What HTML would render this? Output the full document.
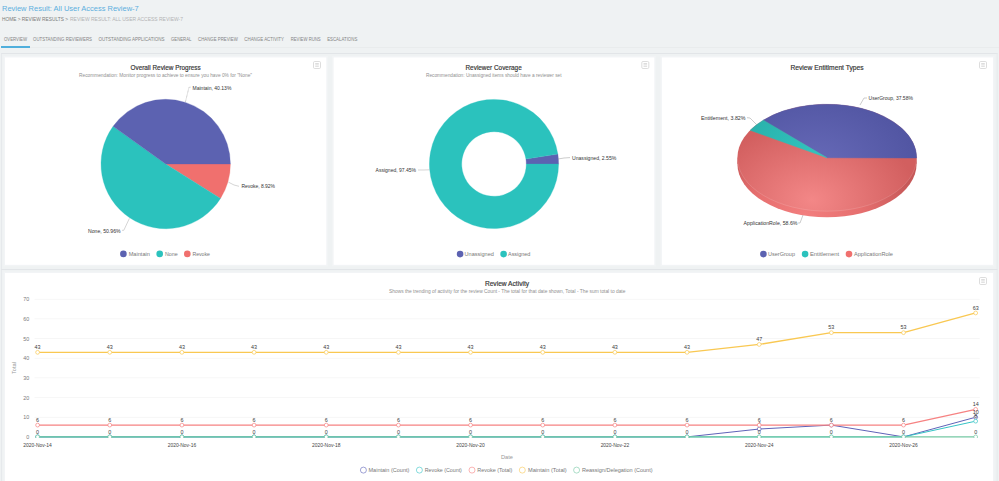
<!DOCTYPE html>
<html><head><meta charset="utf-8"><style>
html,body{margin:0;padding:0;width:999px;height:481px;overflow:hidden;background:#eff2f3;}
svg{display:block;font-family:"Liberation Sans", sans-serif;}
</style></head><body>
<svg width="999" height="481" viewBox="0 0 999 481">
<rect x="0" y="0" width="999" height="481" fill="#eff2f3"/>
<text x="2" y="11.1" font-size="8.0" fill="#5cafde" text-anchor="start" font-weight="normal" textLength="136.7" lengthAdjust="spacingAndGlyphs">Review Result: All User Access Review-7</text>
<text x="2" y="21.1" font-size="4.9" fill="#7a7a7a" text-anchor="start" font-weight="normal" textLength="66" lengthAdjust="spacingAndGlyphs">HOME &gt; REVIEW RESULTS &gt;</text>
<text x="70" y="21.2" font-size="4.9" fill="#b3b3b3" text-anchor="start" font-weight="normal" textLength="113" lengthAdjust="spacingAndGlyphs">REVIEW RESULT: ALL USER ACCESS REVIEW-7</text>
<text x="4" y="41.2" font-size="4.8" fill="#858585" text-anchor="start" font-weight="normal" textLength="23" lengthAdjust="spacingAndGlyphs">OVERVIEW</text>
<text x="33" y="41.2" font-size="4.8" fill="#858585" text-anchor="start" font-weight="normal" textLength="59" lengthAdjust="spacingAndGlyphs">OUTSTANDING REVIEWERS</text>
<text x="98.4" y="41.2" font-size="4.8" fill="#858585" text-anchor="start" font-weight="normal" textLength="66.2" lengthAdjust="spacingAndGlyphs">OUTSTANDING APPLICATIONS</text>
<text x="171" y="41.2" font-size="4.8" fill="#858585" text-anchor="start" font-weight="normal" textLength="20.4" lengthAdjust="spacingAndGlyphs">GENERAL</text>
<text x="198" y="41.2" font-size="4.8" fill="#858585" text-anchor="start" font-weight="normal" textLength="39.8" lengthAdjust="spacingAndGlyphs">CHANGE PREVIEW</text>
<text x="244.3" y="41.2" font-size="4.8" fill="#858585" text-anchor="start" font-weight="normal" textLength="39.7" lengthAdjust="spacingAndGlyphs">CHANGE ACTIVITY</text>
<text x="290.7" y="41.2" font-size="4.8" fill="#858585" text-anchor="start" font-weight="normal" textLength="30.0" lengthAdjust="spacingAndGlyphs">REVIEW RUNS</text>
<text x="327.2" y="41.2" font-size="4.8" fill="#858585" text-anchor="start" font-weight="normal" textLength="30.1" lengthAdjust="spacingAndGlyphs">ESCALATIONS</text>
<rect x="30" y="47.3" width="969" height="0.6" fill="#e4e7ea"/>
<rect x="1" y="46" width="29" height="2" fill="#50afdc"/>
<rect x="1" y="53" width="996.5" height="1" fill="#e2e5e8"/>
<rect x="1" y="53" width="0.8" height="428" fill="#e4e7ea"/>
<rect x="996.7" y="53" width="0.8" height="428" fill="#e4e7ea"/>
<rect x="1" y="269" width="996.5" height="1" fill="#e2e5e8"/>
<rect x="3.5" y="56.0" width="324.3" height="210.3" fill="#f2f4f6"/>
<rect x="5" y="57.5" width="321.3" height="207.3" fill="#fff"/>
<rect x="332.1" y="56.0" width="323.69999999999993" height="210.3" fill="#f2f4f6"/>
<rect x="333.6" y="57.5" width="320.69999999999993" height="207.3" fill="#fff"/>
<rect x="660.4" y="56.0" width="334.1" height="210.3" fill="#f2f4f6"/>
<rect x="661.9" y="57.5" width="331.1" height="207.3" fill="#fff"/>
<rect x="3.5" y="271.5" width="991" height="211" fill="#f2f4f6"/>
<rect x="5" y="273" width="988" height="208" fill="#fff"/>
<rect x="313.5" y="61.5" width="7" height="7" rx="1.2" fill="none" stroke="#d4d4d4" stroke-width="0.8"/>
<rect x="315.2" y="63.3" width="3.6" height="0.6" fill="#c6c6c6"/>
<rect x="315.2" y="64.6" width="3.6" height="0.6" fill="#c6c6c6"/>
<rect x="315.2" y="65.89999999999999" width="3.6" height="0.6" fill="#c6c6c6"/>
<rect x="641.8" y="61.5" width="7" height="7" rx="1.2" fill="none" stroke="#d4d4d4" stroke-width="0.8"/>
<rect x="643.5" y="63.3" width="3.6" height="0.6" fill="#c6c6c6"/>
<rect x="643.5" y="64.6" width="3.6" height="0.6" fill="#c6c6c6"/>
<rect x="643.5" y="65.89999999999999" width="3.6" height="0.6" fill="#c6c6c6"/>
<rect x="979.5" y="61.5" width="7" height="7" rx="1.2" fill="none" stroke="#d4d4d4" stroke-width="0.8"/>
<rect x="981.2" y="63.3" width="3.6" height="0.6" fill="#c6c6c6"/>
<rect x="981.2" y="64.6" width="3.6" height="0.6" fill="#c6c6c6"/>
<rect x="981.2" y="65.89999999999999" width="3.6" height="0.6" fill="#c6c6c6"/>
<rect x="979.5" y="277.5" width="7" height="7" rx="1.2" fill="none" stroke="#d4d4d4" stroke-width="0.8"/>
<rect x="981.2" y="279.3" width="3.6" height="0.6" fill="#c6c6c6"/>
<rect x="981.2" y="280.6" width="3.6" height="0.6" fill="#c6c6c6"/>
<rect x="981.2" y="281.90000000000003" width="3.6" height="0.6" fill="#c6c6c6"/>
<text x="130.5" y="69.5" font-size="7.2" fill="#333" text-anchor="start" font-weight="normal" textLength="70.2" lengthAdjust="spacingAndGlyphs" stroke="#333" stroke-width="0.18">Overall Review Progress</text>
<text x="79" y="76.6" font-size="5.0" fill="#8f8f8f" text-anchor="start" font-weight="normal" textLength="173" lengthAdjust="spacingAndGlyphs">Recommendation: Monitor progress to achieve to ensure you have 0% for "None"</text>
<text x="465.5" y="69.5" font-size="7.2" fill="#333" text-anchor="start" font-weight="normal" textLength="56.2" lengthAdjust="spacingAndGlyphs" stroke="#333" stroke-width="0.18">Reviewer Coverage</text>
<text x="426" y="76.6" font-size="5.0" fill="#8f8f8f" text-anchor="start" font-weight="normal" textLength="135.5" lengthAdjust="spacingAndGlyphs">Recommendation: Unassigned items should have a reviewer set</text>
<text x="790.4" y="69.5" font-size="7.2" fill="#333" text-anchor="start" font-weight="normal" textLength="73.2" lengthAdjust="spacingAndGlyphs" stroke="#333" stroke-width="0.18">Review Entitlment Types</text>
<path d="M165.7,164 L230.40,164.00 A64.7,64.7 0 0 1 220.51,198.38 Z" fill="#f0706e" stroke="#f0706e" stroke-width="0.3" stroke-linejoin="round"/>
<path d="M165.7,164 L220.51,198.38 A64.7,64.7 0 1 1 113.09,126.34 Z" fill="#2bc2bd" stroke="#2bc2bd" stroke-width="0.3" stroke-linejoin="round"/>
<path d="M165.7,164 L113.09,126.34 A64.7,64.7 0 0 1 230.40,164.00 Z" fill="#5c62b1" stroke="#5c62b1" stroke-width="0.3" stroke-linejoin="round"/>
<path d="M185.4,102 L189,87.3 L191,87.1" fill="none" stroke="#888" stroke-width="0.5" stroke-dasharray="0.8,0.5"/>
<text x="192.5" y="89.9" font-size="5.0" fill="#333" text-anchor="start" font-weight="normal" textLength="38.9" lengthAdjust="spacingAndGlyphs">Maintain, 40.13%</text>
<path d="M228.5,182.2 L234,185 L239,186.3" fill="none" stroke="#aaa" stroke-width="0.5"/>
<text x="241.4" y="187.8" font-size="5.0" fill="#333" text-anchor="start" font-weight="normal" textLength="33.6" lengthAdjust="spacingAndGlyphs">Revoke, 8.92%</text>
<path d="M129.4,218.4 L123.8,230.3 L122,230.3" fill="none" stroke="#aaa" stroke-width="0.5"/>
<text x="88" y="232.7" font-size="5.0" fill="#333" text-anchor="start" font-weight="normal" textLength="32.6" lengthAdjust="spacingAndGlyphs">None, 50.96%</text>
<circle cx="123.4" cy="253.9" r="3.3" fill="#5c62b1"/>
<text x="128.7" y="256.1" font-size="6.0" fill="#777" text-anchor="start" font-weight="normal" textLength="21.2" lengthAdjust="spacingAndGlyphs">Maintain</text>
<circle cx="159.7" cy="253.9" r="3.3" fill="#2bc2bd"/>
<text x="165" y="256.1" font-size="6.0" fill="#777" text-anchor="start" font-weight="normal" textLength="12.7" lengthAdjust="spacingAndGlyphs">None</text>
<circle cx="187.3" cy="253.9" r="3.3" fill="#f0706e"/>
<text x="192.4" y="256.1" font-size="6.0" fill="#777" text-anchor="start" font-weight="normal" textLength="17.6" lengthAdjust="spacingAndGlyphs">Revoke</text>
<path d="M557.84,154.12 A64.6,64.6 0 0 1 558.60,164.00 L526.30,164.00 A32.3,32.3 0 0 0 525.92,159.06 Z" fill="#5c62b1" stroke="#5c62b1" stroke-width="0.3" stroke-linejoin="round"/>
<path d="M558.60,164.00 A64.6,64.6 0 1 1 557.84,154.12 L525.92,159.06 A32.3,32.3 0 1 0 526.30,164.00 Z" fill="#2bc2bd" stroke="#2bc2bd" stroke-width="0.3" stroke-linejoin="round"/>
<path d="M558,159 L564,158 L570,157.6" fill="none" stroke="#999" stroke-width="0.5"/>
<text x="572" y="159.6" font-size="5.0" fill="#333" text-anchor="start" font-weight="normal" textLength="44.3" lengthAdjust="spacingAndGlyphs">Unassigned, 2.55%</text>
<path d="M429.5,169.8 L424,170 L418,170" fill="none" stroke="#aaa" stroke-width="0.5"/>
<text x="375.6" y="171.8" font-size="5.0" fill="#333" text-anchor="start" font-weight="normal" textLength="40.4" lengthAdjust="spacingAndGlyphs">Assigned, 97.45%</text>
<circle cx="460.1" cy="254.1" r="3.3" fill="#5c62b1"/>
<text x="464.6" y="256.3" font-size="6.0" fill="#777" text-anchor="start" font-weight="normal" textLength="29.2" lengthAdjust="spacingAndGlyphs">Unassigned</text>
<circle cx="503.6" cy="254.1" r="3.3" fill="#2bc2bd"/>
<text x="508" y="256.3" font-size="6.0" fill="#777" text-anchor="start" font-weight="normal" textLength="22.4" lengthAdjust="spacingAndGlyphs">Assigned</text>
<defs>
<radialGradient id="gR" gradientUnits="userSpaceOnUse" cx="812" cy="200" r="105" gradientTransform="translate(812 200) scale(1 0.75) translate(-812 -200)">
<stop offset="0" stop-color="#f38787"/><stop offset="1" stop-color="#d25f5f"/></radialGradient>
<radialGradient id="gP" gradientUnits="userSpaceOnUse" cx="815" cy="165" r="100" gradientTransform="translate(815 165) scale(1 0.7) translate(-815 -165)">
<stop offset="0" stop-color="#676ab8"/><stop offset="1" stop-color="#5256a3"/></radialGradient>
<radialGradient id="gT" gradientUnits="userSpaceOnUse" cx="815" cy="165" r="100">
<stop offset="0" stop-color="#33c6c0"/><stop offset="1" stop-color="#26aaa5"/></radialGradient>
<radialGradient id="gS" gradientUnits="userSpaceOnUse" cx="805" cy="215" r="112" gradientTransform="translate(805 215) scale(1 0.7) translate(-805 -215)">
<stop offset="0" stop-color="#f27e7e"/><stop offset="0.5" stop-color="#e66f6f"/><stop offset="1" stop-color="#c65858"/></radialGradient>
</defs>
<ellipse cx="827" cy="163.75" rx="89.6" ry="53.45" fill="url(#gS)"/>
<rect x="737.4" y="157.75" width="179.2" height="6" fill="url(#gS)"/>
<ellipse cx="827" cy="157.75" rx="89.6" ry="53.45" fill="url(#gR)"/>
<path d="M916.6,157.75 A89.6,53.45 0 0 1 737.4,157.75" fill="none" stroke="#ffffff" stroke-opacity="0.22" stroke-width="0.6"/>
<path d="M827,157.75 L763.31,120.15 A89.6,53.45 0 0 1 916.60,157.94 Z" fill="url(#gP)" stroke="url(#gP)" stroke-width="0.5"/>
<path d="M827,157.75 L750.16,130.26 A89.6,53.45 0 0 1 763.31,120.15 Z" fill="url(#gT)" stroke="url(#gT)" stroke-width="0.5"/>
<path d="M860,105 L864,98 L867,98" fill="none" stroke="#999" stroke-width="0.5"/>
<text x="868.6" y="100" font-size="5.0" fill="#333" text-anchor="start" font-weight="normal" textLength="44.3" lengthAdjust="spacingAndGlyphs">UserGroup, 37.58%</text>
<path d="M757,125 L750,118 L747,117.7" fill="none" stroke="#999" stroke-width="0.5"/>
<text x="701" y="119.7" font-size="5.0" fill="#333" text-anchor="start" font-weight="normal" textLength="44.5" lengthAdjust="spacingAndGlyphs">Entitlement, 3.82%</text>
<path d="M803,215 L800,223 L798,223" fill="none" stroke="#999" stroke-width="0.5"/>
<text x="743.6" y="225" font-size="5.0" fill="#333" text-anchor="start" font-weight="normal" textLength="53.9" lengthAdjust="spacingAndGlyphs">ApplicationRole, 58.6%</text>
<circle cx="763.4" cy="254.1" r="3.3" fill="#5c62b1"/>
<text x="768" y="256.3" font-size="6.0" fill="#777" text-anchor="start" font-weight="normal" textLength="27" lengthAdjust="spacingAndGlyphs">UserGroup</text>
<circle cx="805.1" cy="254.1" r="3.3" fill="#2bc2bd"/>
<text x="810" y="256.3" font-size="6.0" fill="#777" text-anchor="start" font-weight="normal" textLength="29" lengthAdjust="spacingAndGlyphs">Entitlement</text>
<circle cx="849" cy="254.1" r="3.3" fill="#f0706e"/>
<text x="854" y="256.3" font-size="6.0" fill="#777" text-anchor="start" font-weight="normal" textLength="39" lengthAdjust="spacingAndGlyphs">ApplicationRole</text>
<text x="484.9" y="285.5" font-size="7.2" fill="#333" text-anchor="start" font-weight="normal" textLength="44.2" lengthAdjust="spacingAndGlyphs" stroke="#333" stroke-width="0.18">Review Activity</text>
<text x="389.1" y="292.8" font-size="5.0" fill="#8f8f8f" text-anchor="start" font-weight="normal" textLength="236.3" lengthAdjust="spacingAndGlyphs">Shows the trending of activity for the review Count - The total for that date shown, Total - The sum total to date</text>
<text x="29.3" y="438.9" font-size="5.4" fill="#7a7a7a" text-anchor="end" font-weight="normal">0</text>
<rect x="34.5" y="416.92999999999995" width="945.2" height="0.6" fill="#f1f1f1"/>
<text x="29.3" y="419.22999999999996" font-size="5.4" fill="#7a7a7a" text-anchor="end" font-weight="normal">10</text>
<rect x="34.5" y="397.25999999999993" width="945.2" height="0.6" fill="#f1f1f1"/>
<text x="29.3" y="399.55999999999995" font-size="5.4" fill="#7a7a7a" text-anchor="end" font-weight="normal">20</text>
<rect x="34.5" y="377.59" width="945.2" height="0.6" fill="#f1f1f1"/>
<text x="29.3" y="379.89" font-size="5.4" fill="#7a7a7a" text-anchor="end" font-weight="normal">30</text>
<rect x="34.5" y="357.91999999999996" width="945.2" height="0.6" fill="#f1f1f1"/>
<text x="29.3" y="360.21999999999997" font-size="5.4" fill="#7a7a7a" text-anchor="end" font-weight="normal">40</text>
<rect x="34.5" y="338.24999999999994" width="945.2" height="0.6" fill="#f1f1f1"/>
<text x="29.3" y="340.54999999999995" font-size="5.4" fill="#7a7a7a" text-anchor="end" font-weight="normal">50</text>
<rect x="34.5" y="318.58" width="945.2" height="0.6" fill="#f1f1f1"/>
<text x="29.3" y="320.88" font-size="5.4" fill="#7a7a7a" text-anchor="end" font-weight="normal">60</text>
<rect x="34.5" y="298.90999999999997" width="945.2" height="0.6" fill="#f1f1f1"/>
<text x="29.3" y="301.21" font-size="5.4" fill="#7a7a7a" text-anchor="end" font-weight="normal">70</text>
<text x="0" y="0" font-size="5.4" fill="#999" text-anchor="middle" transform="translate(16,368) rotate(-90)" textLength="12" lengthAdjust="spacingAndGlyphs">Total</text>
<text x="37.6" y="446.6" font-size="5.2" fill="#444" text-anchor="middle" font-weight="normal" textLength="28.5" lengthAdjust="spacingAndGlyphs">2020-Nov-14</text>
<text x="181.92" y="446.6" font-size="5.2" fill="#444" text-anchor="middle" font-weight="normal" textLength="28.5" lengthAdjust="spacingAndGlyphs">2020-Nov-16</text>
<text x="326.24" y="446.6" font-size="5.2" fill="#444" text-anchor="middle" font-weight="normal" textLength="28.5" lengthAdjust="spacingAndGlyphs">2020-Nov-18</text>
<text x="470.56" y="446.6" font-size="5.2" fill="#444" text-anchor="middle" font-weight="normal" textLength="28.5" lengthAdjust="spacingAndGlyphs">2020-Nov-20</text>
<text x="614.88" y="446.6" font-size="5.2" fill="#444" text-anchor="middle" font-weight="normal" textLength="28.5" lengthAdjust="spacingAndGlyphs">2020-Nov-22</text>
<text x="759.1999999999999" y="446.6" font-size="5.2" fill="#444" text-anchor="middle" font-weight="normal" textLength="28.5" lengthAdjust="spacingAndGlyphs">2020-Nov-24</text>
<text x="903.52" y="446.6" font-size="5.2" fill="#444" text-anchor="middle" font-weight="normal" textLength="28.5" lengthAdjust="spacingAndGlyphs">2020-Nov-26</text>
<text x="507" y="459.2" font-size="5.4" fill="#999" text-anchor="middle" font-weight="normal" textLength="12" lengthAdjust="spacingAndGlyphs">Date</text>
<text x="759.1999999999999" y="425.73199999999997" font-size="5.4" fill="#444" text-anchor="middle" font-weight="normal">4</text>
<defs><clipPath id="plot"><rect x="30" y="290" width="960" height="147.9"/></clipPath></defs><g clip-path="url(#plot)">
<polyline points="37.60,436.90 109.76,436.90 181.92,436.90 254.08,436.90 326.24,436.90 398.40,436.90 470.56,436.90 542.72,436.90 614.88,436.90 687.04,436.90 759.20,429.03 831.36,425.10 903.52,436.90 975.68,417.23" fill="none" stroke="#5f63b8" stroke-width="1.0" stroke-linejoin="round"/>
<circle cx="37.60" cy="436.90" r="1.9" fill="#fff" stroke="#5f63b8" stroke-width="0.7"/>
<circle cx="109.76" cy="436.90" r="1.9" fill="#fff" stroke="#5f63b8" stroke-width="0.7"/>
<circle cx="181.92" cy="436.90" r="1.9" fill="#fff" stroke="#5f63b8" stroke-width="0.7"/>
<circle cx="254.08" cy="436.90" r="1.9" fill="#fff" stroke="#5f63b8" stroke-width="0.7"/>
<circle cx="326.24" cy="436.90" r="1.9" fill="#fff" stroke="#5f63b8" stroke-width="0.7"/>
<circle cx="398.40" cy="436.90" r="1.9" fill="#fff" stroke="#5f63b8" stroke-width="0.7"/>
<circle cx="470.56" cy="436.90" r="1.9" fill="#fff" stroke="#5f63b8" stroke-width="0.7"/>
<circle cx="542.72" cy="436.90" r="1.9" fill="#fff" stroke="#5f63b8" stroke-width="0.7"/>
<circle cx="614.88" cy="436.90" r="1.9" fill="#fff" stroke="#5f63b8" stroke-width="0.7"/>
<circle cx="687.04" cy="436.90" r="1.9" fill="#fff" stroke="#5f63b8" stroke-width="0.7"/>
<circle cx="759.20" cy="429.03" r="1.9" fill="#fff" stroke="#5f63b8" stroke-width="0.7"/>
<circle cx="831.36" cy="425.10" r="1.9" fill="#fff" stroke="#5f63b8" stroke-width="0.7"/>
<circle cx="903.52" cy="436.90" r="1.9" fill="#fff" stroke="#5f63b8" stroke-width="0.7"/>
<circle cx="975.68" cy="417.23" r="1.9" fill="#fff" stroke="#5f63b8" stroke-width="0.7"/>
<polyline points="37.60,436.90 109.76,436.90 181.92,436.90 254.08,436.90 326.24,436.90 398.40,436.90 470.56,436.90 542.72,436.90 614.88,436.90 687.04,436.90 759.20,436.90 831.36,436.90 903.52,436.90 975.68,421.16" fill="none" stroke="#36c4c6" stroke-width="1.0" stroke-linejoin="round"/>
<circle cx="37.60" cy="436.90" r="1.9" fill="#fff" stroke="#36c4c6" stroke-width="0.7"/>
<circle cx="109.76" cy="436.90" r="1.9" fill="#fff" stroke="#36c4c6" stroke-width="0.7"/>
<circle cx="181.92" cy="436.90" r="1.9" fill="#fff" stroke="#36c4c6" stroke-width="0.7"/>
<circle cx="254.08" cy="436.90" r="1.9" fill="#fff" stroke="#36c4c6" stroke-width="0.7"/>
<circle cx="326.24" cy="436.90" r="1.9" fill="#fff" stroke="#36c4c6" stroke-width="0.7"/>
<circle cx="398.40" cy="436.90" r="1.9" fill="#fff" stroke="#36c4c6" stroke-width="0.7"/>
<circle cx="470.56" cy="436.90" r="1.9" fill="#fff" stroke="#36c4c6" stroke-width="0.7"/>
<circle cx="542.72" cy="436.90" r="1.9" fill="#fff" stroke="#36c4c6" stroke-width="0.7"/>
<circle cx="614.88" cy="436.90" r="1.9" fill="#fff" stroke="#36c4c6" stroke-width="0.7"/>
<circle cx="687.04" cy="436.90" r="1.9" fill="#fff" stroke="#36c4c6" stroke-width="0.7"/>
<circle cx="759.20" cy="436.90" r="1.9" fill="#fff" stroke="#36c4c6" stroke-width="0.7"/>
<circle cx="831.36" cy="436.90" r="1.9" fill="#fff" stroke="#36c4c6" stroke-width="0.7"/>
<circle cx="903.52" cy="436.90" r="1.9" fill="#fff" stroke="#36c4c6" stroke-width="0.7"/>
<circle cx="975.68" cy="421.16" r="1.9" fill="#fff" stroke="#36c4c6" stroke-width="0.7"/>
<polyline points="37.60,425.10 109.76,425.10 181.92,425.10 254.08,425.10 326.24,425.10 398.40,425.10 470.56,425.10 542.72,425.10 614.88,425.10 687.04,425.10 759.20,425.10 831.36,425.10 903.52,425.10 975.68,409.36" fill="none" stroke="#f68282" stroke-width="1.2" stroke-linejoin="round"/>
<circle cx="37.60" cy="425.10" r="1.9" fill="#fff" stroke="#f68282" stroke-width="0.7"/>
<circle cx="109.76" cy="425.10" r="1.9" fill="#fff" stroke="#f68282" stroke-width="0.7"/>
<circle cx="181.92" cy="425.10" r="1.9" fill="#fff" stroke="#f68282" stroke-width="0.7"/>
<circle cx="254.08" cy="425.10" r="1.9" fill="#fff" stroke="#f68282" stroke-width="0.7"/>
<circle cx="326.24" cy="425.10" r="1.9" fill="#fff" stroke="#f68282" stroke-width="0.7"/>
<circle cx="398.40" cy="425.10" r="1.9" fill="#fff" stroke="#f68282" stroke-width="0.7"/>
<circle cx="470.56" cy="425.10" r="1.9" fill="#fff" stroke="#f68282" stroke-width="0.7"/>
<circle cx="542.72" cy="425.10" r="1.9" fill="#fff" stroke="#f68282" stroke-width="0.7"/>
<circle cx="614.88" cy="425.10" r="1.9" fill="#fff" stroke="#f68282" stroke-width="0.7"/>
<circle cx="687.04" cy="425.10" r="1.9" fill="#fff" stroke="#f68282" stroke-width="0.7"/>
<circle cx="759.20" cy="425.10" r="1.9" fill="#fff" stroke="#f68282" stroke-width="0.7"/>
<circle cx="831.36" cy="425.10" r="1.9" fill="#fff" stroke="#f68282" stroke-width="0.7"/>
<circle cx="903.52" cy="425.10" r="1.9" fill="#fff" stroke="#f68282" stroke-width="0.7"/>
<circle cx="975.68" cy="409.36" r="1.9" fill="#fff" stroke="#f68282" stroke-width="0.7"/>
<polyline points="37.60,352.32 109.76,352.32 181.92,352.32 254.08,352.32 326.24,352.32 398.40,352.32 470.56,352.32 542.72,352.32 614.88,352.32 687.04,352.32 759.20,344.45 831.36,332.65 903.52,332.65 975.68,312.98" fill="none" stroke="#f9c852" stroke-width="1.3" stroke-linejoin="round"/>
<circle cx="37.60" cy="352.32" r="1.9" fill="#fff" stroke="#f9c852" stroke-width="0.7"/>
<circle cx="109.76" cy="352.32" r="1.9" fill="#fff" stroke="#f9c852" stroke-width="0.7"/>
<circle cx="181.92" cy="352.32" r="1.9" fill="#fff" stroke="#f9c852" stroke-width="0.7"/>
<circle cx="254.08" cy="352.32" r="1.9" fill="#fff" stroke="#f9c852" stroke-width="0.7"/>
<circle cx="326.24" cy="352.32" r="1.9" fill="#fff" stroke="#f9c852" stroke-width="0.7"/>
<circle cx="398.40" cy="352.32" r="1.9" fill="#fff" stroke="#f9c852" stroke-width="0.7"/>
<circle cx="470.56" cy="352.32" r="1.9" fill="#fff" stroke="#f9c852" stroke-width="0.7"/>
<circle cx="542.72" cy="352.32" r="1.9" fill="#fff" stroke="#f9c852" stroke-width="0.7"/>
<circle cx="614.88" cy="352.32" r="1.9" fill="#fff" stroke="#f9c852" stroke-width="0.7"/>
<circle cx="687.04" cy="352.32" r="1.9" fill="#fff" stroke="#f9c852" stroke-width="0.7"/>
<circle cx="759.20" cy="344.45" r="1.9" fill="#fff" stroke="#f9c852" stroke-width="0.7"/>
<circle cx="831.36" cy="332.65" r="1.9" fill="#fff" stroke="#f9c852" stroke-width="0.7"/>
<circle cx="903.52" cy="332.65" r="1.9" fill="#fff" stroke="#f9c852" stroke-width="0.7"/>
<circle cx="975.68" cy="312.98" r="1.9" fill="#fff" stroke="#f9c852" stroke-width="0.7"/>
<polyline points="37.60,436.90 109.76,436.90 181.92,436.90 254.08,436.90 326.24,436.90 398.40,436.90 470.56,436.90 542.72,436.90 614.88,436.90 687.04,436.90 759.20,436.90 831.36,436.90 903.52,436.90 975.68,436.90" fill="none" stroke="#74c8a3" stroke-width="1.2" stroke-linejoin="round"/>
<circle cx="37.60" cy="436.90" r="1.9" fill="#fff" stroke="#74c8a3" stroke-width="0.7"/>
<circle cx="109.76" cy="436.90" r="1.9" fill="#fff" stroke="#74c8a3" stroke-width="0.7"/>
<circle cx="181.92" cy="436.90" r="1.9" fill="#fff" stroke="#74c8a3" stroke-width="0.7"/>
<circle cx="254.08" cy="436.90" r="1.9" fill="#fff" stroke="#74c8a3" stroke-width="0.7"/>
<circle cx="326.24" cy="436.90" r="1.9" fill="#fff" stroke="#74c8a3" stroke-width="0.7"/>
<circle cx="398.40" cy="436.90" r="1.9" fill="#fff" stroke="#74c8a3" stroke-width="0.7"/>
<circle cx="470.56" cy="436.90" r="1.9" fill="#fff" stroke="#74c8a3" stroke-width="0.7"/>
<circle cx="542.72" cy="436.90" r="1.9" fill="#fff" stroke="#74c8a3" stroke-width="0.7"/>
<circle cx="614.88" cy="436.90" r="1.9" fill="#fff" stroke="#74c8a3" stroke-width="0.7"/>
<circle cx="687.04" cy="436.90" r="1.9" fill="#fff" stroke="#74c8a3" stroke-width="0.7"/>
<circle cx="759.20" cy="436.90" r="1.9" fill="#fff" stroke="#74c8a3" stroke-width="0.7"/>
<circle cx="831.36" cy="436.90" r="1.9" fill="#fff" stroke="#74c8a3" stroke-width="0.7"/>
<circle cx="903.52" cy="436.90" r="1.9" fill="#fff" stroke="#74c8a3" stroke-width="0.7"/>
<circle cx="975.68" cy="436.90" r="1.9" fill="#fff" stroke="#74c8a3" stroke-width="0.7"/>
</g>
<text x="37.6" y="349.01899999999995" font-size="5.4" fill="#3a3a3a" text-anchor="middle" font-weight="normal">43</text>
<text x="109.75999999999999" y="349.01899999999995" font-size="5.4" fill="#3a3a3a" text-anchor="middle" font-weight="normal">43</text>
<text x="181.92" y="349.01899999999995" font-size="5.4" fill="#3a3a3a" text-anchor="middle" font-weight="normal">43</text>
<text x="254.07999999999998" y="349.01899999999995" font-size="5.4" fill="#3a3a3a" text-anchor="middle" font-weight="normal">43</text>
<text x="326.24" y="349.01899999999995" font-size="5.4" fill="#3a3a3a" text-anchor="middle" font-weight="normal">43</text>
<text x="398.4" y="349.01899999999995" font-size="5.4" fill="#3a3a3a" text-anchor="middle" font-weight="normal">43</text>
<text x="470.56" y="349.01899999999995" font-size="5.4" fill="#3a3a3a" text-anchor="middle" font-weight="normal">43</text>
<text x="542.72" y="349.01899999999995" font-size="5.4" fill="#3a3a3a" text-anchor="middle" font-weight="normal">43</text>
<text x="614.88" y="349.01899999999995" font-size="5.4" fill="#3a3a3a" text-anchor="middle" font-weight="normal">43</text>
<text x="687.04" y="349.01899999999995" font-size="5.4" fill="#3a3a3a" text-anchor="middle" font-weight="normal">43</text>
<text x="759.1999999999999" y="341.15099999999995" font-size="5.4" fill="#3a3a3a" text-anchor="middle" font-weight="normal">47</text>
<text x="831.36" y="329.349" font-size="5.4" fill="#3a3a3a" text-anchor="middle" font-weight="normal">53</text>
<text x="903.52" y="329.349" font-size="5.4" fill="#3a3a3a" text-anchor="middle" font-weight="normal">53</text>
<text x="975.68" y="309.679" font-size="5.4" fill="#3a3a3a" text-anchor="middle" font-weight="normal">63</text>
<text x="37.6" y="421.79799999999994" font-size="5.4" fill="#3a3a3a" text-anchor="middle" font-weight="normal">6</text>
<text x="109.75999999999999" y="421.79799999999994" font-size="5.4" fill="#3a3a3a" text-anchor="middle" font-weight="normal">6</text>
<text x="181.92" y="421.79799999999994" font-size="5.4" fill="#3a3a3a" text-anchor="middle" font-weight="normal">6</text>
<text x="254.07999999999998" y="421.79799999999994" font-size="5.4" fill="#3a3a3a" text-anchor="middle" font-weight="normal">6</text>
<text x="326.24" y="421.79799999999994" font-size="5.4" fill="#3a3a3a" text-anchor="middle" font-weight="normal">6</text>
<text x="398.4" y="421.79799999999994" font-size="5.4" fill="#3a3a3a" text-anchor="middle" font-weight="normal">6</text>
<text x="470.56" y="421.79799999999994" font-size="5.4" fill="#3a3a3a" text-anchor="middle" font-weight="normal">6</text>
<text x="542.72" y="421.79799999999994" font-size="5.4" fill="#3a3a3a" text-anchor="middle" font-weight="normal">6</text>
<text x="614.88" y="421.79799999999994" font-size="5.4" fill="#3a3a3a" text-anchor="middle" font-weight="normal">6</text>
<text x="687.04" y="421.79799999999994" font-size="5.4" fill="#3a3a3a" text-anchor="middle" font-weight="normal">6</text>
<text x="759.1999999999999" y="421.79799999999994" font-size="5.4" fill="#3a3a3a" text-anchor="middle" font-weight="normal">6</text>
<text x="831.36" y="421.79799999999994" font-size="5.4" fill="#3a3a3a" text-anchor="middle" font-weight="normal">6</text>
<text x="903.52" y="421.79799999999994" font-size="5.4" fill="#3a3a3a" text-anchor="middle" font-weight="normal">6</text>
<text x="975.68" y="406.06199999999995" font-size="5.4" fill="#3a3a3a" text-anchor="middle" font-weight="normal">14</text>
<text x="975.68" y="417.864" font-size="5.4" fill="#3a3a3a" text-anchor="middle" font-weight="normal">8</text>
<text x="975.68" y="413.92999999999995" font-size="5.4" fill="#3a3a3a" text-anchor="middle" font-weight="normal">10</text>
<text x="37.6" y="433.59999999999997" font-size="5.4" fill="#3a3a3a" text-anchor="middle" font-weight="normal">0</text>
<text x="109.75999999999999" y="433.59999999999997" font-size="5.4" fill="#3a3a3a" text-anchor="middle" font-weight="normal">0</text>
<text x="181.92" y="433.59999999999997" font-size="5.4" fill="#3a3a3a" text-anchor="middle" font-weight="normal">0</text>
<text x="254.07999999999998" y="433.59999999999997" font-size="5.4" fill="#3a3a3a" text-anchor="middle" font-weight="normal">0</text>
<text x="326.24" y="433.59999999999997" font-size="5.4" fill="#3a3a3a" text-anchor="middle" font-weight="normal">0</text>
<text x="398.4" y="433.59999999999997" font-size="5.4" fill="#3a3a3a" text-anchor="middle" font-weight="normal">0</text>
<text x="470.56" y="433.59999999999997" font-size="5.4" fill="#3a3a3a" text-anchor="middle" font-weight="normal">0</text>
<text x="542.72" y="433.59999999999997" font-size="5.4" fill="#3a3a3a" text-anchor="middle" font-weight="normal">0</text>
<text x="614.88" y="433.59999999999997" font-size="5.4" fill="#3a3a3a" text-anchor="middle" font-weight="normal">0</text>
<text x="687.04" y="433.59999999999997" font-size="5.4" fill="#3a3a3a" text-anchor="middle" font-weight="normal">0</text>
<text x="759.1999999999999" y="433.59999999999997" font-size="5.4" fill="#3a3a3a" text-anchor="middle" font-weight="normal">0</text>
<text x="831.36" y="433.59999999999997" font-size="5.4" fill="#3a3a3a" text-anchor="middle" font-weight="normal">0</text>
<text x="903.52" y="433.59999999999997" font-size="5.4" fill="#3a3a3a" text-anchor="middle" font-weight="normal">0</text>
<text x="975.68" y="433.59999999999997" font-size="5.4" fill="#3a3a3a" text-anchor="middle" font-weight="normal">0</text>
<circle cx="363.4" cy="470.1" r="3" fill="none" stroke="#5f63b8" stroke-width="0.7" stroke-opacity="0.85"/>
<text x="368.5" y="472.3" font-size="6.0" fill="#777" text-anchor="start" font-weight="normal" textLength="40.9" lengthAdjust="spacingAndGlyphs">Maintain (Count)</text>
<circle cx="419.4" cy="470.1" r="3" fill="none" stroke="#36c4c6" stroke-width="0.7" stroke-opacity="0.85"/>
<text x="424.8" y="472.3" font-size="6.0" fill="#777" text-anchor="start" font-weight="normal" textLength="37.1" lengthAdjust="spacingAndGlyphs">Revoke (Count)</text>
<circle cx="472" cy="470.1" r="3" fill="none" stroke="#f68282" stroke-width="0.7" stroke-opacity="0.85"/>
<text x="477.3" y="472.3" font-size="6.0" fill="#777" text-anchor="start" font-weight="normal" textLength="35.1" lengthAdjust="spacingAndGlyphs">Revoke (Total)</text>
<circle cx="522.3" cy="470.1" r="3" fill="none" stroke="#f9c852" stroke-width="0.7" stroke-opacity="0.85"/>
<text x="528" y="472.3" font-size="6.0" fill="#777" text-anchor="start" font-weight="normal" textLength="38.7" lengthAdjust="spacingAndGlyphs">Maintain (Total)</text>
<circle cx="576.6" cy="470.1" r="3" fill="none" stroke="#74c8a3" stroke-width="0.7" stroke-opacity="0.85"/>
<text x="582" y="472.3" font-size="6.0" fill="#777" text-anchor="start" font-weight="normal" textLength="70.5" lengthAdjust="spacingAndGlyphs">Reassign/Delegation (Count)</text>
</svg>
</body></html>
